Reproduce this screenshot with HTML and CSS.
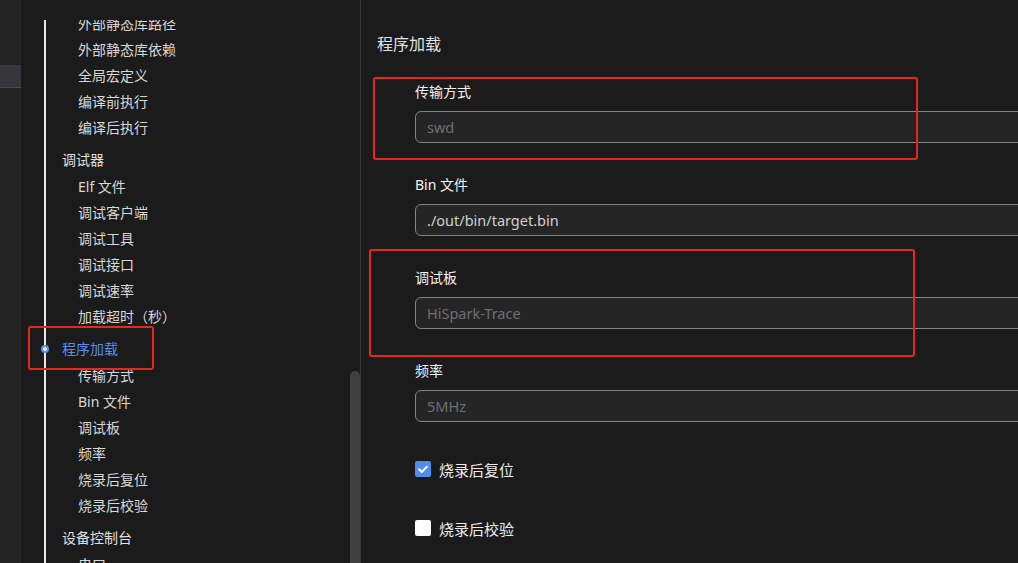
FILE: index.html
```html
<!DOCTYPE html>
<html lang="zh-CN">
<head>
<meta charset="utf-8">
<title>程序加载</title>
<link rel="stylesheet" href="styles.css">
</head>
<body>
<div class="app">
  <div class="strip">
    <div class="strip-active"></div>
  </div>
  <nav class="nav">
    <div class="nav-scroll">
      <ul class="tree">
        <li class="sub">外部静态库路径</li>
        <li class="sub">外部静态库依赖</li>
        <li class="sub">全局宏定义</li>
        <li class="sub">编译前执行</li>
        <li class="sub">编译后执行</li>
        <li class="group">调试器</li>
        <li class="sub">Elf 文件</li>
        <li class="sub">调试客户端</li>
        <li class="sub">调试工具</li>
        <li class="sub">调试接口</li>
        <li class="sub">调试速率</li>
        <li class="sub">加载超时（秒）</li>
        <li class="group active"><span class="dot"></span>程序加载</li>
        <li class="sub">传输方式</li>
        <li class="sub">Bin 文件</li>
        <li class="sub">调试板</li>
        <li class="sub">频率</li>
        <li class="sub">烧录后复位</li>
        <li class="sub">烧录后校验</li>
        <li class="group">设备控制台</li>
        <li class="sub">串口</li>
      </ul>
    </div>
    <div class="scrollbar"><div class="thumb"></div></div>
  </nav>
  <main class="content">
    <h2 class="title">程序加载</h2>
    <div class="form">
      <div class="field">
        <label class="label">传输方式</label>
        <div class="input placeholder">swd</div>
      </div>
      <div class="field">
        <label class="label">Bin 文件</label>
        <div class="input">./out/bin/target.bin</div>
      </div>
      <div class="field">
        <label class="label">调试板</label>
        <div class="input placeholder">HiSpark-Trace</div>
      </div>
      <div class="field">
        <label class="label">频率</label>
        <div class="input placeholder">5MHz</div>
      </div>
      <div class="check-row">
        <span class="box checked">
          <svg viewBox="0 0 16 16" width="16" height="16"><path d="M4 8.3 L6.8 11 L12 5.6" fill="none" stroke="#ffffff" stroke-width="2" stroke-linecap="round" stroke-linejoin="round"/></svg>
        </span>
        <span class="check-label">烧录后复位</span>
      </div>
      <div class="check-row">
        <span class="box"></span>
        <span class="check-label">烧录后校验</span>
      </div>
    </div>
  </main>
</div>
<div class="mark mark-nav"></div>
<div class="mark mark-transfer"></div>
<div class="mark mark-board"></div>
</body>
</html>
```
FILE: styles.css
```css
* { box-sizing: border-box; }
html, body {
  margin: 0;
  padding: 0;
  width: 1018px;
  height: 563px;
  overflow: hidden;
  background: #1b1b1b;
  font-family: "Noto Sans", "Noto Sans CJK SC", sans-serif;
  color: #d4d4d4;
}
body { position: relative; }

.app {
  display: flex;
  height: 563px;
}

/* left activity strip */
.strip {
  width: 21px;
  flex: none;
  background: #242424;
  padding-top: 65px;
}
.strip-active {
  height: 23px;
  background: #37363c;
  border-bottom: 1px solid #4a4a4a;
}

/* navigation tree */
.nav {
  width: 340px;
  flex: none;
  display: flex;
  padding-top: 20px;
  border-right: 1px solid #363636;
  background: #1b1b1b;
}
.nav-scroll {
  flex: 1;
  overflow: hidden;
  position: relative;
}
.tree {
  list-style: none;
  margin: -9px 0 0 0;
  padding: 0;
  position: relative;
}
.nav-scroll::before {
  content: "";
  position: absolute;
  left: 23px;
  top: 0;
  bottom: 0;
  width: 2px;
  background: #e6e6e6;
}
.tree li {
  font-family: "Noto Sans", "Noto Sans CJK SC", sans-serif;
  font-size: 14px;
  white-space: nowrap;
}
.sub {
  height: 26px;
  line-height: 26px;
  padding-left: 57px;
  color: #d8d8d8;
}
.group {
  height: 33px;
  line-height: 26px;
  padding-top: 6px;
  padding-left: 41px;
  color: #e0e0e0;
  position: relative;
}
.group.active { color: #5b8ee6; }
.dot {
  position: absolute;
  left: 20px;
  top: 15px;
  width: 8px;
  height: 8px;
  border-radius: 50%;
  background: radial-gradient(circle, #dce8ff 0 1.6px, #5a8ff0 2.2px);
}
.scrollbar {
  width: 10px;
  flex: none;
  display: flex;
  flex-direction: column;
  justify-content: flex-end;
}
.thumb {
  height: 192px;
  background: #404040;
  border-radius: 5px 5px 0 0;
}

/* content */
.content {
  flex: 1;
  padding: 32px 0 0 16px;
  overflow: hidden;
}
.title {
  margin: 0 0 29px 0;
  font-family: "Noto Sans CJK SC", sans-serif;
  font-size: 16px;
  font-weight: normal;
  line-height: 22px;
  color: #e2e2e2;
}
.form {
  padding-left: 38px;
  width: 700px;
}
.field {
  display: flex;
  flex-direction: column;
  margin-bottom: 33px;
}
.label {
  font-family: "Noto Sans", "Noto Sans CJK SC", sans-serif;
  font-size: 14px;
  line-height: 18px;
  height: 18px;
  margin-bottom: 10px;
  color: #f2f2f2;
}
.input {
  height: 32px;
  line-height: 30px;
  border: 1px solid #858585;
  border-radius: 6px;
  background: #252525;
  padding-left: 11px;
  font-size: 14.5px;
  color: #d0d0d0;
}
.input.placeholder { color: #6f6f6f; }

.check-row {
  display: flex;
  align-items: center;
  gap: 8px;
  height: 24px;
  margin-top: 35px;
  margin-bottom: 35px;
}
.box {
  width: 16px;
  height: 16px;
  border-radius: 2px;
  background: #ffffff;
  display: flex;
}
.box.checked { background: #4f8cf0; }
.check-label {
  font-family: "Noto Sans CJK SC", sans-serif;
  font-size: 15px;
  color: #ececec;
}

/* red annotation marks */
.mark {
  position: absolute;
  border: 2px solid #e02a1e;
  border-radius: 3px;
  box-shadow: 0 0 1px rgba(224, 42, 30, 0.6);
}
.mark-nav { left: 28px; top: 326px; width: 126px; height: 44px; }
.mark-transfer { left: 373px; top: 77px; width: 545px; height: 83px; }
.mark-board { left: 369px; top: 249px; width: 546px; height: 108px; }
```
